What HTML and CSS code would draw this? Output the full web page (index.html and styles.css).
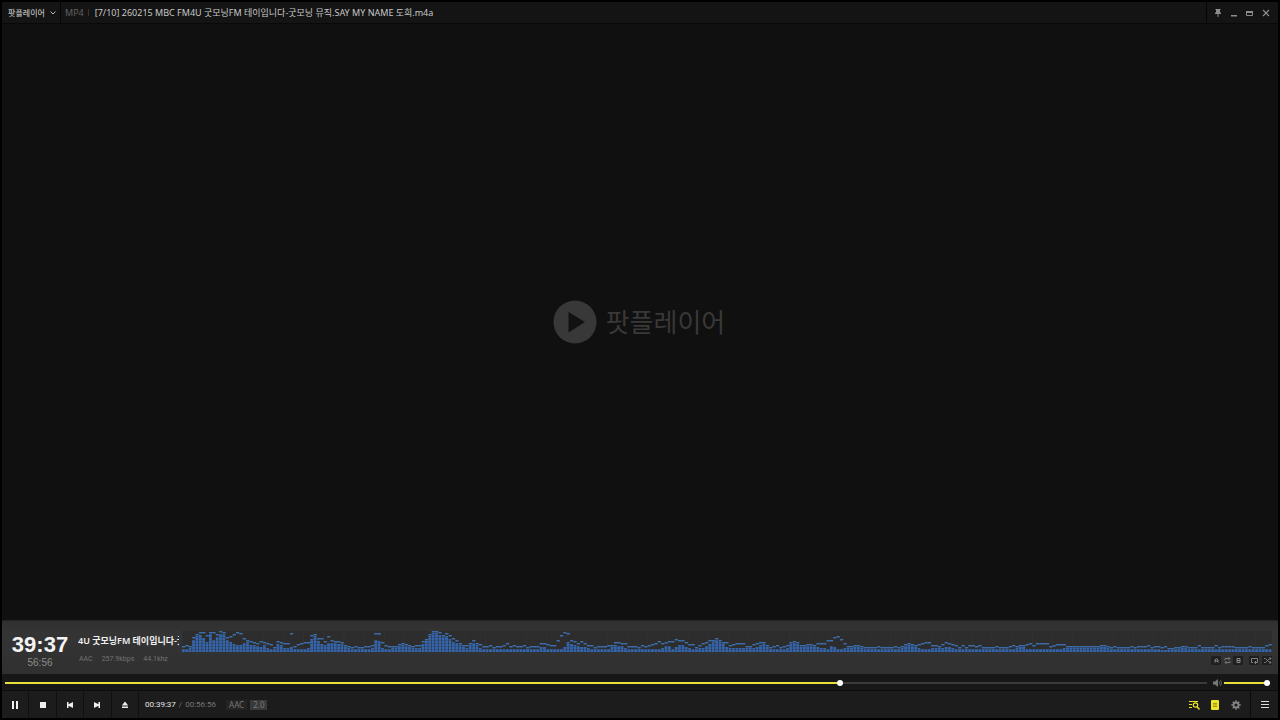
FILE: index.html
```html
<!DOCTYPE html>
<html lang="ko">
<head>
<meta charset="utf-8">
<title>팟플레이어</title>
<link rel="stylesheet" href="styles.css">
</head>
<body>
<div class="player">
  <header class="titlebar">
    <button class="app-menu" type="button">팟플레이어
      <svg width="6" height="4" viewBox="0 0 6 4"><path d="M.5.5 3 3 5.5.5" fill="none" stroke="currentColor"/></svg>
    </button>
    <span class="format">MP4</span>
    <span class="divider"></span>
    <h1 class="file-name">[7/10] 260215 MBC FM4U 굿모닝FM 테이입니다-굿모닝 뮤직.SAY MY NAME 도희.m4a</h1>
    <div class="window-buttons">
      <button type="button" aria-label="항상 위"><svg width="8" height="10" viewBox="0 0 8 10"><path d="M1.500 1h5v1H6v2.500h1V6H1V4.500h1V2h-.5zM3.500 6h1v3h-1z" fill="currentColor"/></svg></button>
      <button type="button" aria-label="최소화"><svg width="8" height="10" viewBox="0 0 8 10"><path d="M1 7h6v1.500H1z" fill="currentColor"/></svg></button>
      <button type="button" aria-label="최대화"><svg width="8" height="10" viewBox="0 0 8 10"><path d="M.5 3.500h6v4h-6z" fill="none" stroke="currentColor"/><path d="M0 3h7v2H0z" fill="currentColor"/></svg></button>
      <button type="button" aria-label="닫기"><svg width="8" height="10" viewBox="0 0 8 10"><path d="m1 2 6 6M7 2 1 8" stroke="currentColor" stroke-width="1.200"/></svg></button>
    </div>
  </header>

  <main class="screen">
    <svg class="brand-mark" width="44" height="44" viewBox="0 0 44 44"><circle cx="22" cy="22" r="21.500" fill="#383838"/><path d="M15.500 12v20.500L32 22z" fill="#121212"/></svg>
    <span class="brand-name">팟플레이어</span>
  </main>

  <section class="info">
    <div class="clock">
      <strong class="clock-now">39:37</strong>
      <span class="clock-total">56:56</span>
    </div>
    <div class="track">
      <div class="track-name">4U 굿모닝FM 테이입니다-굿</div>
      <div class="track-meta"><span>AAC</span><span>257.9kbps</span><span>44.1khz</span></div>
    </div>
    <div class="visual">
      <svg class="spectrum" viewBox="0 0 1090 24" preserveAspectRatio="none" aria-hidden="true"></svg>
      <div class="modes">
        <button class="mode" type="button" aria-label="구간 시작"><svg width="9" height="9" viewBox="0 0 9 9"><path d="M3 6.500V4l1.500-1.500L6 4v2.500M3 5h3" fill="none" stroke="currentColor"/></svg></button>
        <button class="mode mode-plain" type="button" aria-label="구간 반복"><svg width="7" height="9" viewBox="0 0 7 9"><path d="M1 4.300V2.500h4.500M4.500 1l1.500 1.500L4.500 4M6 5v1.500H1.500M2.500 5 1 6.500 2.500 8" fill="none" stroke="currentColor" stroke-width=".8"/></svg></button>
        <button class="mode" type="button" aria-label="구간 끝"><svg width="9" height="9" viewBox="0 0 9 9"><path d="M3 2.500h3v4H3zM3 4.500h3" fill="none" stroke="currentColor"/></svg></button>
        <button class="mode mode-gap" type="button" aria-label="반복"><svg width="9" height="9" viewBox="0 0 9 9"><path d="M3 6.500H1.500v-4h6v4H5M6 5 4.500 6.500 6 8" fill="none" stroke="currentColor" stroke-width=".9"/></svg></button>
        <button class="mode mode-last" type="button" aria-label="무작위"><svg width="9" height="9" viewBox="0 0 9 9"><path d="M1 2.500h1.500l4 4H8M1 6.500h1.500l4-4H8M6.500 1 8 2.500 6.500 4M6.500 5 8 6.500 6.500 8" fill="none" stroke="currentColor" stroke-width=".8"/></svg></button>
      </div>
    </div>
  </section>

  <div class="seek-row">
    <input class="slider seek" type="range" min="0" max="3416" value="2377" aria-label="재생 위치" style="--fill:69.500%">
    <button class="mute" type="button" aria-label="음소거"><svg width="9" height="8" viewBox="0 0 9 8"><path d="M0 2.500h2L5 0v8L2 5.500H0z" fill="currentColor"/><path d="M6.200 2.500q1 1.500 0 3M7.500 1q2 3 0 6" fill="none" stroke="currentColor" stroke-width=".7"/></svg></button>
    <input class="slider volume" type="range" min="0" max="100" value="100" aria-label="음량" style="--fill:100%">
  </div>

  <footer class="controls">
    <div class="transport">
      <button class="control" type="button" aria-label="일시정지"><svg width="8" height="8" viewBox="0 0 8 8"><path d="M1 0h2v8H1zM5 0h2v8H5z" fill="currentColor"/></svg></button>
      <button class="control" type="button" aria-label="정지"><svg width="8" height="8" viewBox="0 0 8 8"><path d="M1 1h6v6H1z" fill="currentColor"/></svg></button>
      <button class="control" type="button" aria-label="이전"><svg width="8" height="8" viewBox="0 0 8 8"><path d="M1 1h1.500v2.300L7 1v6L2.500 4.700V7H1z" fill="currentColor"/></svg></button>
      <button class="control" type="button" aria-label="다음"><svg width="8" height="8" viewBox="0 0 8 8"><path d="M7 1H5.500v2.300L1 1v6l4.500-2.300V7H7z" fill="currentColor"/></svg></button>
      <button class="control" type="button" aria-label="열기"><svg width="8" height="8" viewBox="0 0 8 8"><path d="M4 .5 7.200 4.500H.8zM1 5.500h6V7H1z" fill="currentColor"/></svg></button>
    </div>
    <div class="times"><span class="elapsed">00:39:37</span><span class="slash">/</span><span class="duration">00:56:56</span></div>
    <span class="tag">AAC</span>
    <span class="tag tag-solid">2.0</span>
    <div class="tools">
      <button class="tool tool-on" type="button" aria-label="재생 목록 검색"><svg width="12" height="12" viewBox="0 0 12 12" fill="none" stroke="currentColor"><path d="M1 2.500h9M1 5.500h3M1 8.500h3"/><circle cx="7.500" cy="6" r="2.200" stroke-width="1.200"/><path d="m9 7.800 2.500 2.700" stroke-width="1.500"/></svg></button>
      <button class="tool tool-on" type="button" aria-label="재생 목록"><svg width="10" height="12" viewBox="0 0 10 12"><rect x="1" y="1" width="8" height="10" rx="1" fill="currentColor"/><path d="M3 4.500h4M3 6h4M3 7.500h4" stroke="#8b8718" stroke-width=".8"/></svg></button>
      <button class="tool" type="button" aria-label="설정"><svg width="10" height="10" viewBox="0 0 10 10" fill="none" stroke="currentColor"><circle cx="5" cy="5" r="2.500" stroke-width="1.800"/><path d="M5 .3v2M5 7.700v2M.3 5h2M7.700 5h2M1.700 1.700 3 3M7 7l1.300 1.300M8.300 1.700 7 3M3 7 1.700 8.300" stroke-width="1.400"/></svg></button>
      <button class="tool tool-menu" type="button" aria-label="메뉴"><svg width="10" height="9" viewBox="0 0 10 9"><path d="M1 1.500h8M1 4.500h8M1 7.500h8" stroke="currentColor"/></svg></button>
    </div>
  </footer>
</div>
<script src="spectrum.js"></script>
</body>
</html>
```

FILE: styles.css
```css
* { box-sizing: border-box; }
body {
  margin: 0;
  background: #000;
  color: #ccc;
  font-family: "Noto Sans", "Noto Sans CJK KR", sans-serif;
}
button {
  display: flex;
  align-items: center;
  justify-content: center;
  margin: 0;
  padding: 0;
  border: 0;
  background: none;
  color: inherit;
  font: inherit;
}
svg { display: block; flex: none; }

.player {
  display: flex;
  flex-direction: column;
  height: 100vh;
  padding: 2px;
}

.titlebar {
  display: flex;
  align-items: center;
  height: 22px;
  border-bottom: 1px solid #090909;
  background: #141414;
  font-size: 9px;
  line-height: 12px;
  white-space: nowrap;
}
.app-menu {
  align-self: stretch;
  gap: 5px;
  width: 59px;
  padding-left: 2px;
  border-right: 1px solid #050505;
  color: #bbb;
  font-size: 8px;
  font-weight: 500;
}
.format { margin-left: 4px; color: #626262; }
.divider { width: 1px; height: 7px; margin: 0 6px 0 4px; background: #333; }
.file-name { margin: 0; color: #c8c8c8; font-size: 9px; font-weight: 400; }
.window-buttons {
  display: flex;
  align-self: stretch;
  gap: 8px;
  margin-left: auto;
  padding: 0 8px 0 7px;
  border-left: 1px solid #050505;
  color: #8c8c8c;
}

.screen {
  display: flex;
  flex: 1;
  align-items: center;
  justify-content: center;
  gap: 9px;
  padding-right: 2px;
  background: #101010;
}
.brand-name { color: #383838; font-size: 26px; line-height: 40px; }

.info {
  display: flex;
  height: 54px;
  padding: 0 6px 0 8px;
  border-top: 1px solid #242424;
  background: linear-gradient(#303030, #343434 12px, #303030);
}
.clock {
  display: flex;
  flex-direction: column;
  align-items: center;
  width: 60px;
  padding-top: 12px;
  font-family: "Liberation Sans", sans-serif;
}
.clock-now { color: #f4f4f4; font-size: 22px; line-height: 24px; }
.clock-total { color: #8b8b8b; font-size: 10px; line-height: 12px; }
.track { width: 101px; margin: 13px 3px 0 8px; white-space: nowrap; }
.track-name { overflow: hidden; color: #f0f0f0; font-size: 9px; font-weight: 600; line-height: 13px; }
.track-meta {
  display: flex;
  gap: 9px;
  margin-top: 7px;
  padding-left: 1px;
  color: #747474;
  font-family: Roboto, sans-serif;
  font-size: 7px;
  line-height: 10px;
}
.visual { flex: 1; padding-top: 7px; }
.spectrum { width: 100%; height: 24px; }
.modes { display: flex; justify-content: flex-end; margin-top: 4px; color: #8a8a8a; }
.mode { width: 10px; height: 9px; border-radius: 1px; background: #1f1f1f; }
.mode-plain { width: 7px; margin: 0 2px 0 3px; background: none; }
.mode-gap { margin-left: 6px; }
.mode-last { margin-left: 3px; }

.seek-row {
  display: flex;
  align-items: center;
  height: 16px;
  padding: 1px 8px 0 3px;
  background: #171717;
}
.slider {
  height: 12px;
  margin: 0;
  appearance: none;
  background: none;
}
.slider::-webkit-slider-runnable-track {
  height: 2px;
  background: linear-gradient(90deg, #e8e03a var(--fill), #3a3a3a var(--fill));
}
.slider::-webkit-slider-thumb {
  width: 6px;
  height: 6px;
  margin-top: -2px;
  border-radius: 50%;
  appearance: none;
  background: #fff;
}
.seek { flex: 1; }
.mute { margin: 0 2px 0 6px; color: #777; }
.volume { width: 46px; }

.controls {
  display: flex;
  align-items: center;
  height: 28px;
  border-top: 1px solid #0c0c0c;
  background: #1c1c1c;
  font-size: 8px;
  line-height: 10px;
}
.transport { display: flex; align-self: stretch; width: 137px; }
.control { flex: 1; border-right: 1px solid #101010; color: #eee; }
.times { display: flex; gap: 3px; margin: 0 10px 0 6px; font-family: Roboto, sans-serif; }
.elapsed { color: #e4e4e4; }
.slash, .duration { color: #777; }
.tag { margin-right: 3px; padding: 0 3px; background: #242424; color: #777; }
.tag-solid { background: #393939; }
.tools { display: flex; align-self: stretch; margin-left: auto; }
.tool { width: 21px; color: #858585; }
.tool-on { color: #eee52a; }
.tool-menu { width: 28px; margin-left: 4px; border-left: 1px solid #0c0c0c; color: #ddd; }
```

FILE: spectrum.js
```js
const svg = document.querySelector(".spectrum");
const BASE = 24;
const COUNT = 323;
const STEP = 1090 / COUNT;

const levels = [
  [0,3],[3,3],[7,4],[10,12],[14,17],[17,17],[20,14],[24,10],[27,18],[30,12],[33,14],[37,18],[41,18],[44,12],[47,10],
  [54,7],[58,7],[61,9],[64,10],[67,7],[71,7],[78,5],[81,7],[84,4],[91,3],[94,8],[98,7],[102,3],[108,5],[111,3],[119,3],
  [125,4],[128,13],[131,17],[134,12],[138,8],[141,7],[144,9],[151,9],[158,8],[162,5],[168,3],[186,3],[189,4],[191,11],
  [195,13],[198,5],[202,3],[214,4],[217,7],[222,6],[228,4],[236,4],[240,9],[244,12],[248,18],[252,20],[256,18],[259,14],
  [262,17],[265,15],[269,11],[276,7],[281,4],[285,4],[289,10],[293,7],[298,3],[316,3],[330,3],[354,3],[360,6],[365,3],
  [380,3],[384,10],[388,8],[400,5],[410,3],[427,3],[431,7],[438,6],[446,3],[478,3],[484,7],[490,3],[497,8],[502,5],
  [510,3],[520,4],[530,10],[534,12],[538,9],[545,4],[562,4],[572,4],[576,7],[581,8],[586,3],[603,3],[608,9],[613,9],
  [617,5],[628,6],[638,4],[645,3],[648,6],[655,3],[673,5],[682,3],[717,3],[724,7],[732,5],[740,3],[766,5],[773,3],
  [832,3],[838,6],[844,3],[914,4],[920,6],[926,3],[970,3],[986,2],[1001,4],[1007,3],[1090,3]
];
const peaks = [
  [0,6],[7,7],[10,15],[15,20],[20,19],[26,18],[28,21],[33,18],[38,20],[44,15],[49,17],[55,19],[59,20],[60,14],[64,12],
  [72,9],[77,11],[84,9],[91,6],[95,12],[99,9],[105,8],[107,20],[109,20],[111,6],[118,9],[124,9],[130,20],[134,15],[141,11],
  [145,16],[149,11],[158,9],[164,5],[175,5],[189,6],[190,21],[196,19],[199,10],[204,5],[213,5],[218,9],[225,6],[238,7],
  [241,12],[251,21],[259,18],[264,19],[271,13],[280,6],[285,7],[289,12],[294,9],[300,6],[318,6],[324,8],[336,6],[354,6],
  [360,10],[369,6],[374,9],[377,17],[382,20],[386,18],[387,13],[393,9],[398,11],[407,6],[426,6],[433,11],[441,8],[456,5],
  [468,8],[478,10],[489,11],[498,13],[504,9],[513,6],[521,9],[531,13],[541,9],[548,8],[558,9],[566,5],[571,9],[578,9],
  [585,5],[595,6],[602,6],[609,11],[615,7],[625,6],[635,9],[642,9],[647,13],[653,16],[657,17],[659,9],[668,6],[678,5],
  [694,5],[713,5],[723,6],[734,8],[744,10],[755,6],[766,10],[776,5],[789,7],[800,5],[823,5],[836,7],[846,8],[858,9],
  [869,7],[876,9],[884,5],[918,5],[940,5],[962,6],[973,6],[990,4],[1009,5],[1016,6],[1027,5],[1033,6],[1062,5],[1078,5],
  [1085,6],[1087,10],[1090,10]
];

function sample(points, x) {
  const next = points.findIndex(point => point[0] >= x);
  if (next < 1) return points[0][1];
  const [x0, y0] = points[next - 1];
  const [x1, y1] = points[next];
  return y0 + (y1 - y0) * (x - x0) / (x1 - x0);
}

function add(name, attributes) {
  const node = document.createElementNS("http://www.w3.org/2000/svg", name);
  for (const key in attributes) node.setAttribute(key, attributes[key]);
  svg.append(node);
}

add("rect", { x: 0, y: 3, width: 1090, height: 21, fill: "#2d2d2d" });
let bars = "";
let caps = "";
let columns = "";
let seams = "";
for (let i = 0; i < COUNT; i++) {
  const x = i * STEP;
  // small alternation keeps neighbouring peaks from merging into a line
  const jitter = [0, 0, 1, 0, -1][(i * 7) % 5];
  const level = Math.round(sample(levels, x));
  const peak = Math.max(level + 2, Math.min(21, Math.round(sample(peaks, x)) + jitter));
  bars += `M${x} ${BASE}v${-level}h2.800v${level}z`;
  caps += `M${x} ${BASE - peak}h3.200v1.500h-3.200z`;
  if (i % 6 === 0) columns += `M${x} 4v20`;
}
for (let y = 3; y < BASE; y += 3) seams += `M0 ${y + 0.5}h1090`;
add("path", { d: columns, stroke: "#333", "stroke-width": 0.7 });
add("path", { d: bars, fill: "#3566ad" });
add("path", { d: seams, stroke: "#2b2b2b", "stroke-opacity": 0.25 });
add("path", { d: caps, fill: "#3c6dac" });
```
